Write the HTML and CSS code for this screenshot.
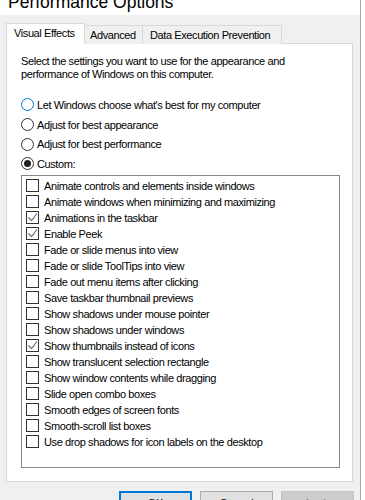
FILE: index.html
```html
<!DOCTYPE html>
<html lang="en">
<head>
  <meta charset="UTF-8">
  <title>Performance Options</title>
  <link rel="stylesheet" href="styles.css">
</head>
<body>
  <div class="window">
    <div class="title-bar">
      <h1 class="title">Performance Options</h1>
    </div>
    <div class="dialog">
      <div class="tabs">
        <div class="tab active">Visual Effects</div>
        <div class="tab advanced">Advanced</div>
        <div class="tab dep">Data Execution Prevention</div>
      </div>
      <div class="panel">
        <p class="intro">Select the settings you want to use for the appearance and<br>performance of Windows on this computer.</p>
        <div class="options">
          <div class="radio focus"><span class="circle"></span>Let Windows choose what's best for my computer</div>
          <div class="radio"><span class="circle"></span>Adjust for best appearance</div>
          <div class="radio"><span class="circle"></span>Adjust for best performance</div>
          <div class="radio checked"><span class="circle"></span>Custom:</div>
        </div>
        <ul class="effects">
          <li><span class="box"></span>Animate controls and elements inside windows</li>
          <li><span class="box"></span>Animate windows when minimizing and maximizing</li>
          <li class="on"><span class="box"><svg viewBox="0 0 11 11"><polyline points="1.5,5.5 4.5,8.5 10,1.5"/></svg></span>Animations in the taskbar</li>
          <li class="on"><span class="box"><svg viewBox="0 0 11 11"><polyline points="1.5,5.5 4.5,8.5 10,1.5"/></svg></span>Enable Peek</li>
          <li><span class="box"></span>Fade or slide menus into view</li>
          <li><span class="box"></span>Fade or slide ToolTips into view</li>
          <li><span class="box"></span>Fade out menu items after clicking</li>
          <li><span class="box"></span>Save taskbar thumbnail previews</li>
          <li><span class="box"></span>Show shadows under mouse pointer</li>
          <li><span class="box"></span>Show shadows under windows</li>
          <li class="on"><span class="box"><svg viewBox="0 0 11 11"><polyline points="1.5,5.5 4.5,8.5 10,1.5"/></svg></span>Show thumbnails instead of icons</li>
          <li><span class="box"></span>Show translucent selection rectangle</li>
          <li><span class="box"></span>Show window contents while dragging</li>
          <li><span class="box"></span>Slide open combo boxes</li>
          <li><span class="box"></span>Smooth edges of screen fonts</li>
          <li><span class="box"></span>Smooth-scroll list boxes</li>
          <li><span class="box"></span>Use drop shadows for icon labels on the desktop</li>
        </ul>
      </div>
      <div class="buttons">
        <button class="btn default">OK</button>
        <button class="btn">Cancel</button>
        <button class="btn disabled">Apply</button>
      </div>
    </div>
  </div>
</body>
</html>
```

FILE: styles.css
```css
body {
  margin: 0;
  background: #ffffff;
  font-family: "Liberation Sans", Arial, sans-serif;
  font-size: 11px;
  letter-spacing: -0.4px;
  color: #000000;
  overflow: hidden;
}

.window {
  width: 360px;
  height: 500px;
  background: #f0f0f0;
  border-right: 1px solid #a6a6a6;
}

.title-bar {
  height: 15px;
  background: #ffffff;
  overflow: hidden;
}

.title {
  margin: -13px 0 0 8px;
  font-size: 17.5px;
  font-weight: 400;
  letter-spacing: 0;
  line-height: 30px;
  white-space: nowrap;
}

.dialog {
  padding: 8px 0 0 6px;
}

/* tabs */
.tabs {
  display: flex;
  align-items: flex-end;
  height: 21px;
  position: relative;
  z-index: 1;
}

.tab {
  box-sizing: border-box;
  height: 19px;
  line-height: 18px;
  padding: 0 0 0 5px;
  border: 1px solid #d9d9d9;
  border-bottom: none;
  border-left: none;
  background: #f0f0f0;
  white-space: nowrap;
}

.tab.active {
  width: 79px;
  height: 21px;
  line-height: 19px;
  padding-left: 7px;
  border-left: 1px solid #d9d9d9;
  background: #ffffff;
}

.tab.advanced {
  width: 58px;
}

.tab.dep {
  width: 139px;
  padding-left: 7px;
}

.panel {
  width: 345px;
  height: 437px;
  margin-top: -1px;
  border: 1px solid #d9d9d9;
  background: #ffffff;
}

.intro {
  margin: 11px 0 0 14px;
  line-height: 13px;
}

/* radios */
.options {
  margin: 14px 0 0 14px;
  display: flex;
  flex-direction: column;
}

.radio {
  display: flex;
  align-items: center;
  height: 19.7px;
  gap: 3px;
}

.circle {
  width: 11px;
  height: 11px;
  border: 1px solid #333333;
  border-radius: 50%;
  display: flex;
  align-items: center;
  justify-content: center;
  background: #ffffff;
}

.radio.focus .circle {
  border-color: #0078d7;
}

.radio.checked .circle::after {
  content: "";
  width: 7px;
  height: 7px;
  border-radius: 50%;
  background: #222222;
}

/* effects list */
.effects {
  list-style: none;
  margin: 1px 0 0 14px;
  padding: 2px 0 0 4px;
  width: 313px;
  height: 289px;
  border: 1px solid #828790;
}

.effects li {
  display: flex;
  align-items: center;
  height: 16px;
  gap: 5px;
  white-space: nowrap;
}

.box {
  width: 11px;
  height: 11px;
  border: 1px solid #333333;
  background: #ffffff;
  flex: none;
}

.box svg {
  display: block;
  width: 11px;
  height: 11px;
}

.box polyline {
  fill: none;
  stroke: #707070;
  stroke-width: 1.2;
}

/* bottom buttons */
.buttons {
  display: flex;
  justify-content: flex-end;
  gap: 8px;
  width: 348px;
  margin-top: 9px;
}

.btn {
  width: 73px;
  height: 23px;
  border: 1px solid #adadad;
  background: #e1e1e1;
  font-family: inherit;
  font-size: 11px;
  color: #000000;
  padding: 0;
}

.btn.default {
  border: 2px solid #0078d7;
}

.btn.disabled {
  border: 1px dotted #bfbfbf;
  background: #cccccc;
  color: #838383;
}
```
